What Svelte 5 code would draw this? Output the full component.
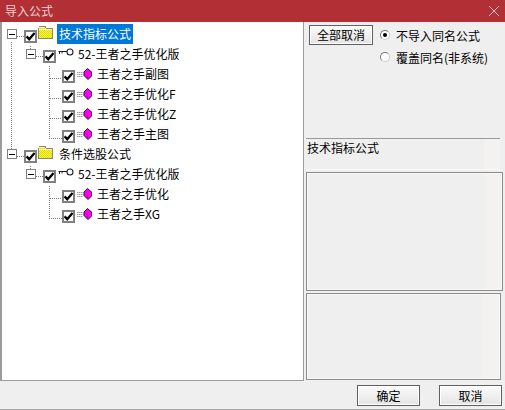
<script lang="ts">
  interface Row { depth: number; label: string; icon: string; expander?: boolean; selected?: boolean; }

  const rows: Row[] = [
    { depth: 0, label: '技术指标公式', icon: 'folder', expander: true, selected: true },
    { depth: 1, label: '52-王者之手优化版', icon: 'key', expander: true },
    { depth: 2, label: '王者之手副图', icon: 'gem' },
    { depth: 2, label: '王者之手优化F', icon: 'gem' },
    { depth: 2, label: '王者之手优化Z', icon: 'gem' },
    { depth: 2, label: '王者之手主图', icon: 'gem' },
    { depth: 0, label: '条件选股公式', icon: 'folder', expander: true },
    { depth: 1, label: '52-王者之手优化版', icon: 'key', expander: true },
    { depth: 2, label: '王者之手优化', icon: 'gem' },
    { depth: 2, label: '王者之手XG', icon: 'gem' }
  ];
</script>

<div class="dialog">
  <header class="titlebar">
    <span>导入公式</span>
    <svg class="close" width="10" height="10" viewBox="0 0 10 10"><path d="M0 0L10 10M10 0L0 10" stroke="#e9c4c6" stroke-width="1" fill="none"/></svg>
  </header>

  <div class="body">
    <div class="tree">
      <!-- dotted connectors sit over the rows -->
      <svg class="lines" width="120" height="210" viewBox="0 0 120 210">
        <g stroke="#808080" stroke-dasharray="1 1" fill="none" shape-rendering="crispEdges">
          <path d="M11.5 18V130M17 12.5H24" />
          <path d="M17 132.5H24M30.5 22V28M36 32.5H43M36 152.5H43M30.5 142V148" />
          <path d="M49.5 42V114.5H62M49.5 54.5H62M49.5 74.5H62M49.5 94.5H62" />
          <path d="M49.5 162V194.5H62M49.5 174.5H62" />
        </g>
      </svg>

      <svg width="0" height="0" class="defs">
        <defs>
          <pattern id="dither" width="2" height="2" patternUnits="userSpaceOnUse">
            <rect width="2" height="2" fill="#ffff00"/>
            <rect width="1" height="1" fill="#d8d050"/>
            <rect x="1" y="1" width="1" height="1" fill="#d8d050"/>
          </pattern>
        </defs>
      </svg>

      {#each rows as row, i (i)}
        <div class="row depth{row.depth}">
          <span class="expander-slot">
            {#if row.expander}
              <span class="expander"><i></i></span>
            {/if}
          </span>
          <span class="check">
            <svg width="9" height="9" viewBox="0 0 9 9"><path d="M0.5 4.4L3.2 7.2L8.6 1" stroke="#000" stroke-width="2.4" fill="none"/></svg>
          </span>
          {#if row.icon === 'folder'}
            <svg class="icon" width="15" height="13" viewBox="0 0 15 13" shape-rendering="crispEdges">
              <path d="M0.5 12.5V2.5L2 0.5H7L8.5 2.5H14.5V12.5Z" fill="url(#dither)" stroke="#8a8a60"/>
              <path d="M1 1.5H7M1 3.5H14" stroke="#fffbc0"/>
            </svg>
          {:else if row.icon === 'key'}
            <svg class="icon" width="16" height="8" viewBox="0 0 16 8">
              <circle cx="12" cy="4" r="3" fill="#fff" stroke="#222" stroke-width="1.1"/>
              <path d="M0.5 3.5H9M1.5 3.5V6M4 3.5V5.5" stroke="#222" fill="none"/>
            </svg>
          {:else}
            <svg class="icon" width="15" height="12" viewBox="0 0 15 12">
              <path d="M0 4.5H6M0 6.5H6M0 8.5H6" stroke="#999" stroke-dasharray="1.5 0.5"/>
              <path d="M10.5 0.5L15 4.5V7.5L11 11.5L7 7.5V4Z" fill="#ff00ee" stroke="#300040"/>
              <path d="M10.5 5V11" stroke="#a000a0" fill="none" stroke-width="0.7"/>
            </svg>
          {/if}
          <span class="label" class:selected={row.selected}>{row.label}</span>
        </div>
      {/each}
    </div>

    <aside class="side">
      <div class="options">
        <button class="btn toggle">全部取消</button>
        <div class="radios">
          <div class="radio-row"><span class="radio on"></span>不导入同名公式</div>
          <div class="radio-row"><span class="radio"></span>覆盖同名(非系统)</div>
        </div>
      </div>
      <div class="desc">技术指标公式</div>
      <div class="panel mid"></div>
      <div class="panel low"></div>
    </aside>
  </div>

  <footer class="actions">
    <button class="btn action">确定</button>
    <button class="btn action">取消</button>
  </footer>
</div>

<style>
  :global(body) { margin: 0; background: #efefef; }
  .dialog {
    width: 505px; height: 410px; box-sizing: border-box; background: #efefef;
    border-bottom: 1px solid #a8a8a8;
    display: flex; flex-direction: column; overflow: hidden;
    font-family: "Noto Sans CJK SC", "Liberation Sans", sans-serif; font-size: 12px; color: #000;
  }
  .titlebar {
    height: 22px; flex: none; background: #b22f35; color: #ecd3d4;
    display: flex; align-items: center; justify-content: space-between;
    padding: 0 5px 0 5px;
  }
  .titlebar span { margin-top: -2px; }
  .close { margin-right: 1px; margin-top: -1px; }

  .body { flex: none; height: 359px; display: flex; }

  .tree {
    position: relative; width: 304px; height: 359px; box-sizing: border-box; flex: none;
    background: #fff; border: 1px solid #9c9c9c; border-top: 0; padding-top: 2px;
    border-left-width: 2px;
  }
  .lines { position: absolute; left: -2px; top: 2px; }
  .defs { position: absolute; }
  .row { position: relative; height: 20px; display: flex; align-items: center; }
  .depth0 { padding-left: 5px; }
  .depth1 { padding-left: 24px; }
  .depth2 { padding-left: 43px; }

  .expander-slot { width: 17px; height: 10px; flex: none; }
  .expander {
    display: flex; align-items: center; justify-content: center;
    width: 10px; height: 10px; box-sizing: border-box; background: #fff; border: 1px solid #808080;
  }
  .expander i { display: block; width: 6px; height: 1px; background: #000; }

  .check {
    width: 13px; height: 13px; box-sizing: border-box; flex: none; background: #fff;
    border: 2px solid #808080; display: flex; align-items: center; justify-content: center;
    margin-top: 5px;
  }
  .icon { flex: none; }
  .depth0 .icon { margin: -3px 0 0 1px; }
  .depth1 .icon { margin: -4px 0 0 2px; }
  .depth2 .icon { margin: 0 0 0 2px; }

  .label { padding: 0 2px; height: 20px; line-height: 19px; white-space: nowrap; }
  .depth0 .label { margin-left: 4px; }
  .depth1 .label { margin-left: 2px; }
  .depth2 .label { margin-left: 3px; }
  .selected { background: #0078d7; color: #fff; }

  .side { flex: 1; display: flex; flex-direction: column; padding: 3px 0 0 2px; min-width: 0; }
  .options { display: flex; gap: 7px; height: 113px; flex: none; padding-left: 3px; }
  .btn {
    font: inherit; color: #000; padding: 0; box-sizing: border-box;
    border: 1px solid #5f5f5f; background: linear-gradient(#fbfbfb, #e4e4e4);
    outline: 1px solid #fff; outline-offset: -2px;
  }
  .toggle { width: 64px; height: 20px; line-height: 16px; }
  .radios { display: flex; flex-direction: column; gap: 2px; }
  .radio-row { height: 20px; display: flex; align-items: center; gap: 6px; white-space: nowrap; }
  .radio {
    width: 10px; height: 10px; box-sizing: border-box; border-radius: 50%; background: #fff;
    border: 1px solid; border-color: #777 #ccc #ccc #777;
    display: flex; align-items: center; justify-content: center; flex: none;
  }
  .radio.on::after { content: ''; width: 4px; height: 4px; border-radius: 50%; background: #000; }

  .desc {
    width: 194px; height: 32px; box-sizing: border-box; flex: none;
    border-top: 1px solid #999; line-height: 18px; padding-left: 1px; margin-bottom: 2px;
    background: linear-gradient(to right, #efefef 178px, #f3f2f0 178px); border-bottom: 1px solid #f8f8f8;
  }
  .panel {
    box-sizing: border-box; flex: none;
    border: 1px solid #8c8c8c; box-shadow: inset 0 0 0 1px #f8f8f8;
  }
  .mid { width: 197px; height: 119px; margin-bottom: 2px; background: linear-gradient(to right, #efefef 178px, #f3f2f0 178px); }
  .low { width: 195px; height: 87px; background: linear-gradient(to right, #efefef 175px, #f3f2f0 175px); }

  .actions { flex: none; height: 28px; box-sizing: border-box; display: flex; justify-content: flex-end; gap: 19px; padding: 4px 3px 0 0; }
  .action { width: 63px; height: 21px; }
</style>
